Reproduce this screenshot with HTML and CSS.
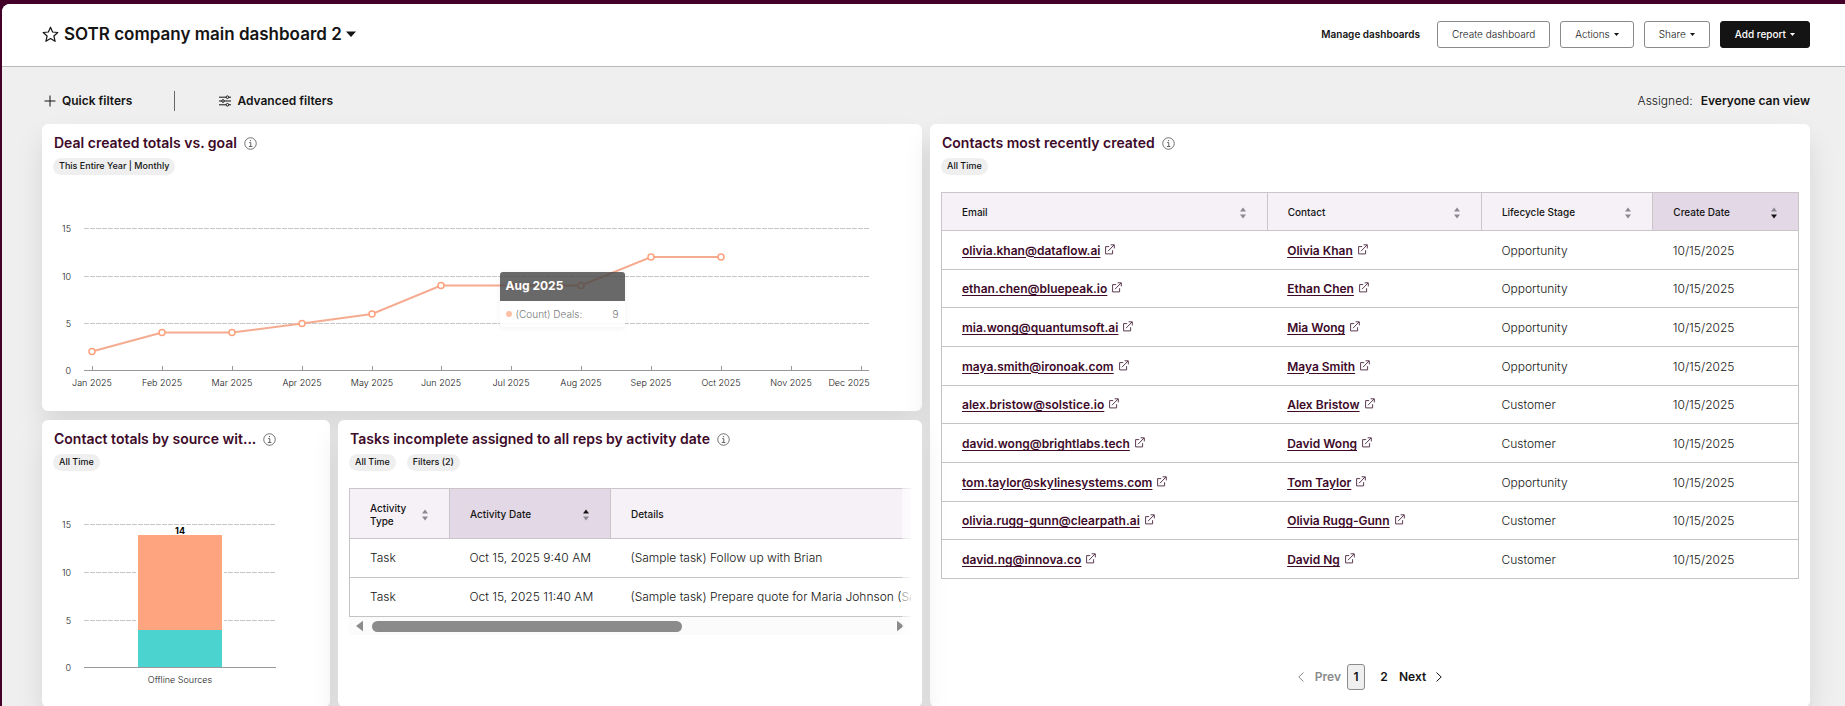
FILE: index.html
```html
<!DOCTYPE html>
<html lang="en">
<head>
<meta charset="utf-8">
<title>SOTR company main dashboard 2</title>
<link rel="stylesheet" href="styles.css">
</head>
<body>
<svg class="sprite" aria-hidden="true">
  <symbol id="i-info" viewBox="0 0 14 14"><circle cx="7" cy="7" r="6.2" fill="none" stroke="currentColor" stroke-width="0.9"/><path d="M5.6 6h1.7v4.1M5.2 10.2h3.8" fill="none" stroke="currentColor" stroke-width="1"/><circle cx="7" cy="3.9" r=".75" fill="currentColor"/></symbol>
  <symbol id="i-ext" viewBox="0 0 11 11"><path d="M5.2 2.6H1.6v7.3h7V6.2M4 7.2l6-6.2M6.6.8h3.7v3.6" fill="none" stroke="currentColor" stroke-width="1"/></symbol>
  <symbol id="i-up" viewBox="0 0 8 5"><path d="M1 4.6 4 .4l3 4.2z" fill="currentColor"/></symbol>
  <symbol id="i-down" viewBox="0 0 8 5"><path d="M1 .4 4 4.6l3-4.2z" fill="currentColor"/></symbol>
</svg>
<div class="shell">
  <header class="topbar">
    <div class="title-group">
      <button class="icon-btn" type="button" aria-label="Favorite dashboard"><svg class="star" viewBox="0 0 17 17"><path d="M8.5 1.2l2.1 4.8 5.2.5-3.9 3.5 1.2 5.3-4.6-2.8-4.6 2.8L5.1 10 1.2 6.5l5.2-.5z" fill="none" stroke="currentColor" stroke-width="1.2" stroke-linejoin="round"/></svg></button>
      <h1 class="title"><button class="title-btn" type="button">SOTR company main dashboard 2<svg class="title-caret" viewBox="0 0 10 6"><path d="M0 .5h10L5 6z" fill="currentColor"/></svg></button></h1>
    </div>
    <div class="actions">
      <a class="manage" href="#manage">Manage dashboards</a>
      <button class="btn" type="button">Create dashboard</button>
      <button class="btn" type="button">Actions<svg class="caret" viewBox="0 0 5 3"><path d="M0 0h5L2.5 3z" fill="currentColor"/></svg></button>
      <button class="btn" type="button">Share<svg class="caret" viewBox="0 0 5 3"><path d="M0 0h5L2.5 3z" fill="currentColor"/></svg></button>
      <button class="btn btn-primary" type="button">Add report<svg class="caret" viewBox="0 0 5 3"><path d="M0 0h5L2.5 3z" fill="currentColor"/></svg></button>
    </div>
  </header>

  <div class="filters">
    <button class="filter-btn quick" type="button"><svg class="plus" viewBox="0 0 12 12"><path d="M6 .5v11M.5 6h11" fill="none" stroke="currentColor" stroke-width="1"/></svg>Quick filters</button>
    <span class="divider"></span>
    <button class="filter-btn" type="button"><svg class="sliders" viewBox="0 0 12 12"><g fill="none" stroke="currentColor" stroke-width="1"><path d="M0 2.2h7M9.8 2.2H12M0 6h2.6M5.4 6H12M0 9.8h7M9.8 9.8H12"/><circle cx="8.4" cy="2.2" r="1.3"/><circle cx="4" cy="6" r="1.3"/><circle cx="8.4" cy="9.8" r="1.3"/></g></svg>Advanced filters</button>
    <div class="assigned">Assigned:<button class="filter-btn" type="button">Everyone can view</button></div>
  </div>

  <main class="grid">
    <section class="card deals">
      <div class="card-head">
        <div class="card-title"><h2>Deal created totals vs. goal</h2><svg class="info"><use href="#i-info"/></svg></div>
        <div class="pills"><span class="pill">This Entire Year | Monthly</span></div>
      </div>
      <div class="chart-wrap">
        <svg class="chart" viewBox="0 0 880 236" role="img" aria-label="Deals created per month">
          <path class="gridline" d="M42 53.5H827M42 101.5H827M42 148.5H827"/>
          <path class="axis" d="M42 195.5H827M50.5 191v4M120.5 191v4M190.5 191v4M260.5 191v4M330.5 191v4M399.5 191v4M469.5 191v4M539.5 191v4M609.5 191v4M679.5 191v4M749.5 191v4M819.5 191v4"/>
          <g class="ylab"><text x="29" y="57">15</text><text x="29" y="105">10</text><text x="29" y="152">5</text><text x="29" y="199">0</text></g>
          <g class="xlab"><text x="50" y="211">Jan 2025</text><text x="120" y="211">Feb 2025</text><text x="190" y="211">Mar 2025</text><text x="260" y="211">Apr 2025</text><text x="330" y="211">May 2025</text><text x="399" y="211">Jun 2025</text><text x="469" y="211">Jul 2025</text><text x="539" y="211">Aug 2025</text><text x="609" y="211">Sep 2025</text><text x="679" y="211">Oct 2025</text><text x="749" y="211">Nov 2025</text><text x="807" y="211">Dec 2025</text></g>
          <path class="series" d="M50 176.5L120 157.5H190L260 148.5L330 139L399 110.5H539L609 82H679"/>
          <g class="dots"><circle cx="50" cy="176.5" r="3"/><circle cx="120" cy="157.5" r="3"/><circle cx="190" cy="157.5" r="3"/><circle cx="260" cy="148.5" r="3"/><circle cx="330" cy="139" r="3"/><circle cx="399" cy="110.5" r="3"/><circle cx="469" cy="110.5" r="3"/><circle cx="539" cy="110.5" r="3"/><circle cx="609" cy="82" r="3"/><circle cx="679" cy="82" r="3"/></g>
        </svg>
        <div class="tooltip" role="tooltip">
          <div class="tip-head">Aug 2025</div>
          <div class="tip-body"><span class="tip-dot"></span><span>(Count) Deals:</span><span class="tip-value">9</span></div>
        </div>
      </div>
    </section>

    <section class="card contacts">
      <div class="card-head">
        <div class="card-title"><h2>Contacts most recently created</h2><svg class="info"><use href="#i-info"/></svg></div>
        <div class="pills"><span class="pill">All Time</span></div>
      </div>
      <table class="table contacts-table">
        <colgroup><col class="c-email"><col class="c-contact"><col class="c-stage"><col class="c-created"></colgroup>
        <thead><tr>
          <th><div class="th">Email<span class="sort"><svg><use href="#i-up"/></svg><svg><use href="#i-down"/></svg></span></div></th>
          <th><div class="th">Contact<span class="sort"><svg><use href="#i-up"/></svg><svg><use href="#i-down"/></svg></span></div></th>
          <th><div class="th">Lifecycle Stage<span class="sort"><svg><use href="#i-up"/></svg><svg><use href="#i-down"/></svg></span></div></th>
          <th class="sorted"><div class="th">Create Date<span class="sort"><svg><use href="#i-up"/></svg><svg class="on"><use href="#i-down"/></svg></span></div></th>
        </tr></thead>
        <tbody>
          <tr><td><a href="#c1">olivia.khan@dataflow.ai</a><svg class="ext"><use href="#i-ext"/></svg></td><td><a href="#c1">Olivia Khan</a><svg class="ext"><use href="#i-ext"/></svg></td><td>Opportunity</td><td>10/15/2025</td></tr>
          <tr><td><a href="#c2">ethan.chen@bluepeak.io</a><svg class="ext"><use href="#i-ext"/></svg></td><td><a href="#c2">Ethan Chen</a><svg class="ext"><use href="#i-ext"/></svg></td><td>Opportunity</td><td>10/15/2025</td></tr>
          <tr><td><a href="#c3">mia.wong@quantumsoft.ai</a><svg class="ext"><use href="#i-ext"/></svg></td><td><a href="#c3">Mia Wong</a><svg class="ext"><use href="#i-ext"/></svg></td><td>Opportunity</td><td>10/15/2025</td></tr>
          <tr><td><a href="#c4">maya.smith@ironoak.com</a><svg class="ext"><use href="#i-ext"/></svg></td><td><a href="#c4">Maya Smith</a><svg class="ext"><use href="#i-ext"/></svg></td><td>Opportunity</td><td>10/15/2025</td></tr>
          <tr><td><a href="#c5">alex.bristow@solstice.io</a><svg class="ext"><use href="#i-ext"/></svg></td><td><a href="#c5">Alex Bristow</a><svg class="ext"><use href="#i-ext"/></svg></td><td>Customer</td><td>10/15/2025</td></tr>
          <tr><td><a href="#c6">david.wong@brightlabs.tech</a><svg class="ext"><use href="#i-ext"/></svg></td><td><a href="#c6">David Wong</a><svg class="ext"><use href="#i-ext"/></svg></td><td>Customer</td><td>10/15/2025</td></tr>
          <tr><td><a href="#c7">tom.taylor@skylinesystems.com</a><svg class="ext"><use href="#i-ext"/></svg></td><td><a href="#c7">Tom Taylor</a><svg class="ext"><use href="#i-ext"/></svg></td><td>Opportunity</td><td>10/15/2025</td></tr>
          <tr><td><a href="#c8">olivia.rugg-gunn@clearpath.ai</a><svg class="ext"><use href="#i-ext"/></svg></td><td><a href="#c8">Olivia Rugg-Gunn</a><svg class="ext"><use href="#i-ext"/></svg></td><td>Customer</td><td>10/15/2025</td></tr>
          <tr><td><a href="#c9">david.ng@innova.co</a><svg class="ext"><use href="#i-ext"/></svg></td><td><a href="#c9">David Ng</a><svg class="ext"><use href="#i-ext"/></svg></td><td>Customer</td><td>10/15/2025</td></tr>
        </tbody>
      </table>
      <nav class="pager" aria-label="Pages">
        <button class="page-btn prev" type="button" disabled><svg class="chev" viewBox="0 0 6 10"><path d="M5.5.5.8 5l4.700 4.5" fill="none" stroke="currentColor"/></svg>Prev</button>
        <button class="page-btn current" type="button" aria-current="page">1</button>
        <button class="page-btn" type="button">2</button>
        <button class="page-btn next" type="button">Next<svg class="chev" viewBox="0 0 6 10"><path d="M.5.5 5.2 5 .5 9.5" fill="none" stroke="currentColor"/></svg></button>
      </nav>
    </section>

    <section class="card sources">
      <div class="card-head">
        <div class="card-title"><h2>Contact totals by source wit...</h2><svg class="info"><use href="#i-info"/></svg></div>
        <div class="pills"><span class="pill">All Time</span></div>
      </div>
      <svg class="chart" viewBox="0 0 288 236" role="img" aria-label="Contact totals by source">
        <path class="gridline" d="M42 53.5H234M42 101.5H234M42 149.5H234"/>
        <rect class="halo" x="94" y="64" width="88" height="132"/>
        <rect class="bar-top" x="96" y="64" width="84" height="95"/>
        <rect class="bar-bottom" x="96" y="159" width="84" height="38"/>
        <path class="axis" d="M42 196.5H234"/>
        <text class="total" x="138" y="63">14</text>
        <g class="ylab"><text x="29" y="57">15</text><text x="29" y="105">10</text><text x="29" y="153">5</text><text x="29" y="200">0</text></g>
        <g class="xlab"><text x="138" y="212">Offline Sources</text></g>
      </svg>
    </section>

    <section class="card tasks">
      <div class="card-head">
        <div class="card-title"><h2>Tasks incomplete assigned to all reps by activity date</h2><svg class="info"><use href="#i-info"/></svg></div>
        <div class="pills"><span class="pill">All Time</span><span class="pill">Filters (2)</span></div>
      </div>
      <div class="scroller">
        <table class="table tasks-table">
          <colgroup><col class="c-type"><col class="c-date"><col></colgroup>
          <thead><tr>
            <th><div class="th">Activity Type<span class="sort"><svg><use href="#i-up"/></svg><svg><use href="#i-down"/></svg></span></div></th>
            <th class="sorted"><div class="th">Activity Date<span class="sort"><svg class="on"><use href="#i-up"/></svg><svg><use href="#i-down"/></svg></span></div></th>
            <th><div class="th">Details</div></th>
          </tr></thead>
          <tbody>
            <tr><td>Task</td><td>Oct 15, 2025 9:40 AM</td><td>(Sample task) Follow up with Brian</td></tr>
            <tr><td>Task</td><td>Oct 15, 2025 11:40 AM</td><td>(Sample task) Prepare quote for Maria Johnson (Sa</td></tr>
          </tbody>
        </table>
        <div class="hscroll" aria-hidden="true">
          <svg class="harrow" viewBox="0 0 8 12"><path d="M8 0v12L0 6z" fill="currentColor"/></svg>
          <div class="track"><div class="thumb"></div></div>
          <svg class="harrow" viewBox="0 0 8 12"><path d="M0 0v12l8-6z" fill="currentColor"/></svg>
        </div>
      </div>
    </section>
  </main>
</div>
</body>
</html>
```
FILE: styles.css
```css
* { box-sizing: border-box; }

body {
  margin: 0;
  height: 100vh;
  padding: 4px 0 0 2px;
  overflow: hidden;
  background: #430029;
  color: #141414;
  font-family: Inter, "Open Sans", sans-serif;
  font-size: 12px;
  line-height: 16px;
}

button {
  margin: 0;
  padding: 0;
  border: 0;
  background: none;
  color: inherit;
  font: inherit;
  cursor: pointer;
}

svg { display: block; flex: none; }
h1, h2 { margin: 0; font: inherit; }

.sprite { position: absolute; width: 0; height: 0; }

.shell {
  height: 100%;
  overflow: hidden;
  border-top-left-radius: 8px;
  background: #efefef;
}

/* Header */
.topbar {
  display: flex;
  align-items: center;
  justify-content: space-between;
  height: 63px;
  padding: 0 35px 2px 40px;
  border-bottom: 1px solid #b9b9b9;
  background: #fff;
}
.title-group { display: flex; align-items: center; gap: 5px; }
.star { width: 17px; height: 17px; }
.title { font-size: 17px; font-weight: 600; line-height: 24px; }
.title-btn { display: flex; align-items: center; gap: 4px; }
.title-caret { width: 10px; height: 6px; }

.actions { display: flex; align-items: center; gap: 10px; font-size: 10px; }
.manage {
  margin-right: 7px;
  color: inherit;
  font-weight: 600;
  text-decoration: none;
}
.btn {
  display: flex;
  align-items: center;
  gap: 4px;
  height: 27px;
  padding: 0 14px;
  border: 1px solid #8a8a8a;
  border-radius: 3px;
  background: #fff;
  font-weight: 300;
}
.btn-primary { border-color: #141414; background: #141414; color: #fff; font-weight: 500; }
.caret { width: 5px; height: 3px; }

/* Filters */
.filters {
  display: flex;
  align-items: center;
  height: 57px;
  padding: 10px 35px 0 42px;
}
.filter-btn { display: flex; align-items: center; gap: 6px; font-weight: 600; }
.plus, .sliders { width: 12px; height: 12px; }
.divider { width: 1px; height: 20px; margin: 0 44px 0 42px; background: #666; }
.assigned { display: flex; gap: 8px; margin-left: auto; font-weight: 300; }

/* Cards */
.grid {
  display: grid;
  grid-template-columns: repeat(12, minmax(0, 1fr));
  grid-template-areas:
    "d d d d d d c c c c c c"
    "s s t t t t c c c c c c";
  grid-template-rows: repeat(2, minmax(287px, auto));
  gap: 9px 8px;
  padding: 0 35px 0 40px;
}
.card {
  display: flex;
  flex-direction: column;
  min-width: 0;
  padding-top: 9px;
  border-radius: 6px;
  background: #fff;
  box-shadow: 0 16px 28px rgba(0, 0, 0, .1);
}
.deals { grid-area: d; }
.contacts { grid-area: c; padding-left: 11px; padding-right: 11px; }
.sources { grid-area: s; }
.tasks { grid-area: t; padding-left: 11px; padding-right: 11px; }
.deals .card-head, .sources .card-head { padding: 0 11px; }

.card-title {
  display: flex;
  align-items: center;
  gap: 7px;
  height: 20px;
  padding-left: 1px;
  color: #3d0a29;
  font-size: 14px;
  font-weight: 600;
  white-space: nowrap;
}
.info { width: 13px; height: 13px; color: #555; }
.pills { display: flex; gap: 11px; margin-top: 5px; }
.pill {
  height: 17px;
  padding: 0 6px;
  border-radius: 9px;
  background: #efefef;
  font-size: 9px;
  font-weight: 500;
}

/* Charts */
.chart-wrap { position: relative; }
.chart { width: 100%; height: auto; }
.gridline { fill: none; stroke: #c6c6c6; stroke-dasharray: 5 1; }
.axis { fill: none; stroke: #999; }
.ylab, .xlab { font-size: 9px; fill: #141414; }
.ylab { text-anchor: end; }
.xlab { text-anchor: middle; }
.ylab text, .xlab text { font-weight: 300; }
.series { fill: none; stroke: #f5ab90; stroke-width: 2; }
.dots { fill: #fff; stroke: #fea17c; stroke-width: 1.5; }
.halo { fill: #fff; }
.bar-top { fill: #fea580; }
.bar-bottom { fill: #4bd3d0; }
.total { font-size: 9px; font-weight: 700; text-anchor: middle; }

.tooltip {
  position: absolute;
  left: 52%;
  top: 41%;
  width: 125px;
  border-radius: 3px;
  overflow: hidden;
  box-shadow: 0 1px 6px rgba(0, 0, 0, .06);
}
.tip-head {
  padding: 6px;
  height: 29px;
  background: rgba(72, 72, 72, .82);
  color: #fff;
  font-weight: 700;
}
.tip-body {
  display: flex;
  align-items: center;
  height: 26px;
  padding: 0 6px;
  background: rgba(255, 255, 255, .85);
  color: #777;
  font-size: 10px;
  font-weight: 300;
}
.tip-dot { width: 6px; height: 6px; margin-right: 4px; border-radius: 50%; background: #fec0a6; }
.tip-value { margin-left: auto; }

/* Tables */
.table {
  width: 100%;
  margin-top: 17px;
  border-collapse: collapse;
  table-layout: fixed;
  border: 1px solid #c4c4c4;
}
.table th {
  padding: 2px 20px 0 20px;
  border: 1px solid #c9c5c9;
  background: #f6f1f7;
  font-size: 10px;
  font-weight: 500;
  line-height: 13px;
  text-align: left;
}
.table .sorted { background: #e3d8e5; }
.table td {
  padding: 0 0 0 20px;
  border-bottom: 1px solid #c4c4c4;
  font-weight: 300;
  white-space: nowrap;
}
.table a { color: #3d0a29; font-weight: 600; text-underline-offset: 2px; }
.th { display: flex; align-items: center; justify-content: space-between; }
.sort { display: grid; gap: 2px; color: #8c8790; }
.sort svg { width: 8px; height: 5px; }
.sort .on { color: #141414; }
.ext {
  display: inline-block;
  width: 11px;
  height: 11px;
  margin-left: 4px;
  color: #5c3a50;
}

.contacts-table { height: 387px; }
.contacts-table th { height: 38px; }
.contacts-table td { padding-top: 2px; }
.c-email { width: 38%; }
.c-contact { width: 25%; }
.c-stage { width: 20%; }

.pager {
  display: flex;
  align-items: center;
  justify-content: center;
  gap: 6px;
  margin-top: auto;
  padding-bottom: 17px;
  font-weight: 600;
}
.page-btn { display: flex; align-items: center; justify-content: center; min-width: 18px; height: 26px; }
.page-btn.current { border: 1px solid #8a8a8a; border-radius: 3px; background: #efefef; margin-right: 4px; }
.prev { gap: 11px; color: #8a8a8a; }
.next { gap: 10px; }
.chev { width: 6px; height: 10px; }

.scroller { position: relative; overflow: hidden; }
.scroller::after {
  content: "";
  position: absolute;
  top: 0;
  right: 0;
  bottom: 0;
  width: 9px;
  background: linear-gradient(to right, rgba(255, 255, 255, .5), rgba(255, 255, 255, .8));
}
.tasks-table th { height: 50px; }
.tasks-table td { height: 39px; }
.tasks-table { border-right: 0; }
.tasks-table th:last-child { border-right: 0; }
.c-type { width: 100px; }
.c-date { width: 161px; }

.hscroll {
  display: flex;
  align-items: center;
  gap: 9px;
  height: 18px;
  padding: 0 7px;
  background: #fbfbfb;
  color: #8b8b8b;
}
.harrow { width: 7px; height: 12px; }
.track { flex: 1; }
.thumb { width: 60%; height: 11px; border-radius: 6px; background: #8b8b8b; }
```
